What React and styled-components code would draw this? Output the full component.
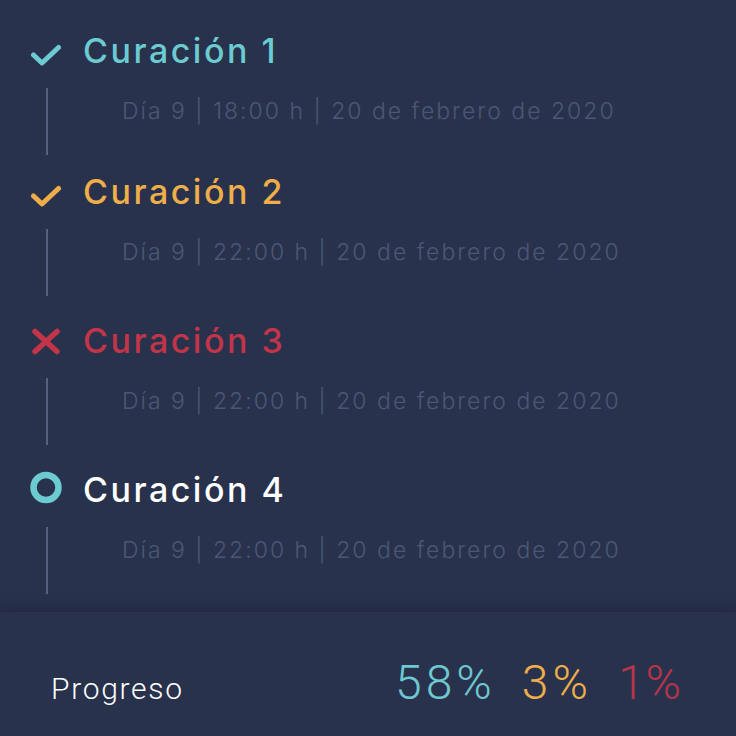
import React from "react";
import styled, { createGlobalStyle } from "styled-components";

const GlobalStyle = createGlobalStyle`
  html, body { margin: 0; padding: 0; background: #28324c; }
  * { box-sizing: border-box; }
`;

const Screen = styled.div`
  width: 736px;
  height: 736px;
  display: flex;
  flex-direction: column;
  background: #28324c;
  overflow: hidden;
  font-family: Inter, "Noto Sans", sans-serif;
`;

const List = styled.div`
  flex: 1;
  display: flex;
  flex-direction: column;
  padding-top: 30px;
`;

const Item = styled.div`
  display: flex;
  flex-direction: column;
  margin-top: ${(p) => p.$gap}px;
`;

const Header = styled.div`
  display: flex;
  align-items: center;
  height: 41px;
`;

const IconSlot = styled.div`
  width: 32px;
  height: 41px;
  margin-left: 30px;
  flex: none;
  svg { display: block; }
`;

const Title = styled.div`
  margin-left: 21px;
  font-size: 34px;
  font-weight: 500;
  line-height: 41px;
  color: ${(p) => p.$color};
  letter-spacing: 2.5px;
  white-space: nowrap;
`;

const Body = styled.div`
  display: flex;
  align-items: flex-start;
  margin-top: 17px;
  height: 67px;
`;

const Rail = styled.div`
  width: 2px;
  height: 67px;
  margin-left: 46px;
  background: #56617f;
  flex: none;
`;

const DateText = styled.div`
  margin-left: 74px;
  padding-top: 12px;
  font-size: 23px;
  font-weight: 300;
  line-height: 23px;
  color: #4c5775;
  letter-spacing: 2px;
  white-space: nowrap;
`;

const Footer = styled.div`
  height: 125px;
  flex: none;
  display: flex;
  align-items: baseline;
  justify-content: space-between;
  padding: 47px 51px 0 51px;
  background: #28324c;
  border-top: 1px solid #222a42;
  box-shadow: 0 -5px 9px rgba(10, 14, 28, 0.16);
  font-family: Roboto, "Noto Sans", sans-serif;
  font-weight: 300;
`;

const Label = styled.div`
  font-size: 30px;
  line-height: 48px;
  color: #ffffff;
  letter-spacing: 1.7px;
`;

const Stats = styled.div`
  display: flex;
  align-items: baseline;
  gap: 26px;
`;

const Stat = styled.span`
  font-size: 48px;
  line-height: 48px;
  color: ${(p) => p.$color};
  letter-spacing: ${(p) => (p.$narrow ? 1 : 4)}px;
  margin-right: ${(p) => (p.$narrow ? 3 : 0)}px;
`;

const TEAL = "#6ccbd0";
const ORANGE = "#efae4a";
const RED = "#c23549";

const CheckIcon = ({ color }) => (
  <svg width="32" height="41" viewBox="0 0 32 41">
    <path
      d="M3.5 25 L12 33 L28.5 17.5"
      fill="none"
      stroke={color}
      strokeWidth="5"
      strokeLinecap="round"
      strokeLinejoin="round"
    />
  </svg>
);

const CrossIcon = ({ color }) => (
  <svg width="32" height="41" viewBox="0 0 32 41">
    <path
      d="M5 11.5 L27 31.5 M27 11.5 L5 31.5"
      fill="none"
      stroke={color}
      strokeWidth="5.5"
      strokeLinecap="round"
    />
  </svg>
);

const RingIcon = ({ color }) => (
  <svg width="32" height="41" viewBox="0 0 32 41">
    <circle cx="16" cy="18.5" r="12.5" fill="none" stroke={color} strokeWidth="6.5" />
  </svg>
);

const items = [
  { title: "Curación 1", color: TEAL, icon: <CheckIcon color={TEAL} />, date: "Día 9 | 18:00 h | 20 de febrero de 2020", gap: 0 },
  { title: "Curación 2", color: ORANGE, icon: <CheckIcon color={ORANGE} />, date: "Día 9 | 22:00 h | 20 de febrero de 2020", gap: 16 },
  { title: "Curación 3", color: RED, icon: <CrossIcon color={RED} />, date: "Día 9 | 22:00 h | 20 de febrero de 2020", gap: 24 },
  { title: "Curación 4", color: "#ffffff", icon: <RingIcon color={TEAL} />, date: "Día 9 | 22:00 h | 20 de febrero de 2020", gap: 24 },
];

export default function App() {
  return (
    <>
      <GlobalStyle />
      <Screen>
        <List>
          {items.map((it) => (
            <Item key={it.title} $gap={it.gap}>
              <Header>
                <IconSlot>{it.icon}</IconSlot>
                <Title $color={it.color}>{it.title}</Title>
              </Header>
              <Body>
                <Rail />
                <DateText>{it.date}</DateText>
              </Body>
            </Item>
          ))}
        </List>
        <Footer>
          <Label>Progreso</Label>
          <Stats>
            <Stat $color="#6fc7cf">58%</Stat>
            <Stat $color={ORANGE}>3%</Stat>
            <Stat $color="#b8344a" $narrow>1%</Stat>
          </Stats>
        </Footer>
      </Screen>
    </>
  );
}
